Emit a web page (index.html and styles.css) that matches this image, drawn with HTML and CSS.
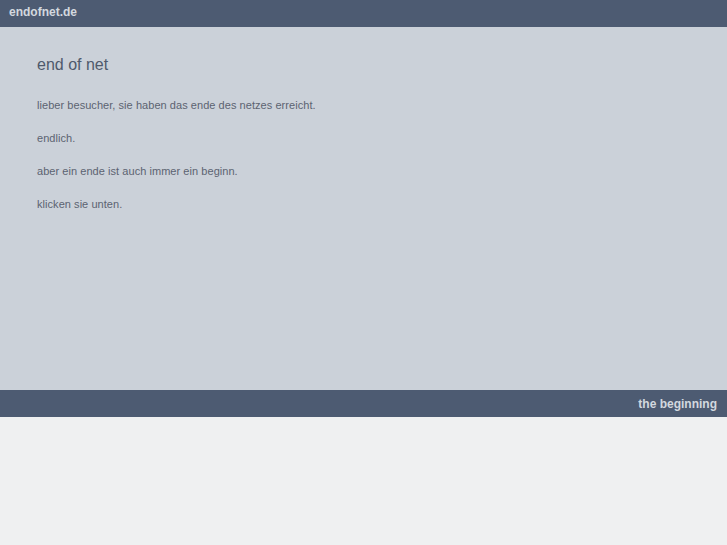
FILE: index.html
```html
<!DOCTYPE html>
<html lang="de">
<head>
    <meta charset="UTF-8">
    <title>endofnet.de</title>
    <link rel="stylesheet" href="styles.css">
</head>
<body>
    <div class="header">endofnet.de</div>
    <div class="content">
        <h1 class="title">end of net</h1>
        <p>lieber besucher, sie haben das ende des netzes erreicht.</p>
        <p>endlich.</p>
        <p>aber ein ende ist auch immer ein beginn.</p>
        <p>klicken sie unten.</p>
    </div>
    <div class="footer"><a href="#">the beginning</a></div>
</body>
</html>
```

FILE: styles.css
```css
html, body {margin:0;background:#eff0f1;font-family:"Liberation Sans", Arial, sans-serif;}
.header {height:27px;line-height:25px;padding:0 9px;background:#4d5b72;color:#d3d8df;font-size:12px;font-weight:bold;}
.content {height:363px;box-sizing:border-box;padding:28px 36px 0 37px;background:#cbd1d9;color:#5c6371;}
.title {margin:0 0 23px;font-size:16px;font-weight:normal;line-height:20px;color:#4f5a6c;}
.content p {margin:0 0 19px;font-size:11px;line-height:14px;letter-spacing:0.05px;}
.footer {height:27px;line-height:26px;padding:0 10px;background:#4d5b72;text-align:right;}
.footer a {color:#d3d8df;font-size:12px;font-weight:bold;text-decoration:none;}
```
